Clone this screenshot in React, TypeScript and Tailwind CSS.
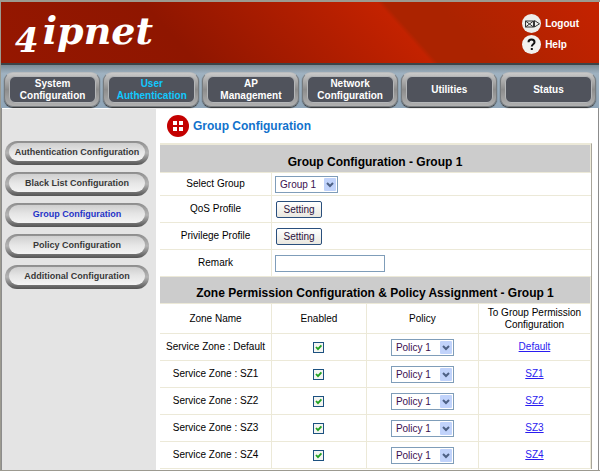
import { useState } from "react";

const NAV = [
  ["System", "Configuration"],
  ["User", "Authentication"],
  ["AP", "Management"],
  ["Network", "Configuration"],
  ["Utilities"],
  ["Status"],
];

const SIDE = [
  "Authentication Configuration",
  "Black List Configuration",
  "Group Configuration",
  "Policy Configuration",
  "Additional Configuration",
];

const ZONES = ["Default", "SZ1", "SZ2", "SZ3", "SZ4"];

const CELL = "border-b border-r border-[#ece9d8] p-0 text-center font-normal";
const BAND =
  "border-b border-r border-[#ece9d8] bg-[#cccccc] bg-clip-padding px-0 pb-0 text-center text-[12px] leading-[14px] font-bold";

function Picker({ id, label, options }: { id?: string; label?: string; options: string[] }) {
  return (
    <span className="relative inline-block h-[17px] align-middle">
      <select
        id={id}
        aria-label={label}
        className="block h-[17px] w-[63px] appearance-none border border-[#7f9db9] bg-white pl-1 text-[10px] leading-[15px] text-[#3a1050] outline-none"
      >
        {options.map((o) => (
          <option key={o}>{o}</option>
        ))}
      </select>
      <svg
        className="pointer-events-none absolute top-0.5 right-0.5"
        width="12"
        height="13"
        viewBox="0 0 12 13"
        aria-hidden="true"
      >
        <rect width="12" height="13" rx="1" fill="#c1d3fb" />
        <path d="M3 5l3 3 3-3" fill="none" stroke="#4d6185" strokeWidth="2" />
      </svg>
    </span>
  );
}

function XpButton({ id }: { id: string }) {
  return (
    <button
      id={id}
      type="button"
      className="ml-1 block h-[17px] w-[46px] rounded-[2px] border border-[#2a4f7c] bg-linear-to-b from-white to-[#e9e7df] text-[10px] leading-[15px] text-[#2a1040]"
    >
      Setting
    </button>
  );
}

function Tick({ label }: { label: string }) {
  const [on, setOn] = useState(true);
  return (
    <span className="relative inline-block size-[11px] align-middle">
      <input
        type="checkbox"
        aria-label={label}
        checked={on}
        onChange={() => setOn(!on)}
        className="block size-[11px] appearance-none border border-[#1c5180] bg-[#f5f5f2]"
      />
      {on && (
        <svg
          className="pointer-events-none absolute inset-0"
          width="11"
          height="11"
          viewBox="0 0 11 11"
          aria-hidden="true"
        >
          <path d="M3 5l2 2.2L8.4 3.4" fill="none" stroke="#21a121" strokeWidth="1.8" />
        </svg>
      )}
    </span>
  );
}

function Logo() {
  return (
    <h1
      aria-label="4ipnet"
      className="flex items-baseline gap-1 pl-[14px] font-['DejaVu_Serif','Liberation_Serif',serif] text-[38px] leading-[58px] font-bold text-white italic"
    >
      <span className="relative top-2 text-[34px] leading-none">4</span>
      <span>ipnet</span>
    </h1>
  );
}

function Header() {
  return (
    <header className="flex h-[61px] items-start justify-between bg-[linear-gradient(48deg,#951700_0%,#8f1600_30%,#c32200_66%,#ab2300_67%,#ab2300_75%,#c52200_100%)] pr-5">
      <Logo />
      <ul className="flex flex-col gap-0.5 pt-3 text-[10px] leading-[19px] font-bold text-white">
        <li>
          <a href="#logout" className="flex items-center gap-1">
            <svg width="19" height="19" viewBox="0 0 19 19" aria-hidden="true">
              <circle cx="9.500" cy="9.500" r="9.500" fill="#ededeb" />
              <path
                d="M3.500 7h8v6h-8zM3.500 7l8 6M11.500 7l-8 6M12.500 6.500v6.500l5-3.200z"
                fill="none"
                stroke="#333"
              />
            </svg>
            Logout
          </a>
        </li>
        <li>
          <a href="#help" className="flex items-center gap-1">
            <svg width="19" height="19" viewBox="0 0 19 19" aria-hidden="true">
              <circle cx="9.500" cy="9.500" r="9.500" fill="#f1f1ef" />
              <path
                d="M6.500 7.300c0-3.600 6-3.600 6 0 0 2-2.700 2-2.700 4.200M9.800 13v2"
                fill="none"
                stroke="#111"
                strokeWidth="2"
              />
            </svg>
            Help
          </a>
        </li>
      </ul>
    </header>
  );
}

function TopNav() {
  return (
    <nav className="flex gap-[3px] border-t-2 border-[#3c4448] bg-linear-to-b from-[#7b8a94] via-[#9fb2c1] via-20% to-[#8fa5b8] px-[3px] pt-[7px] pb-px">
      {NAV.map((lines, i) => (
        <a
          key={i}
          href={"#" + lines.join("-")}
          className="h-[35px] flex-1 rounded-[9px] border border-[#777b7e] border-t-[#b9bcbe] bg-linear-to-b from-[#c9c9c9] via-[#8d8d8d] to-[#b0b0b0] p-[3px] pl-1 shadow-[0_1px_1px_#333]"
        >
          <span
            className={
              "flex h-full items-center justify-center rounded-[6px] border border-[#b4b6b8] bg-[#50535c] text-center text-[10px] leading-[12px] font-bold " +
              (i === 1 ? "text-[#10c8ff]" : "text-white")
            }
          >
            <span>
              {lines.map((l) => (
                <span key={l} className="block">
                  {l}
                </span>
              ))}
            </span>
          </span>
        </a>
      ))}
    </nav>
  );
}

function Sidebar() {
  return (
    <nav className="flex w-[154px] shrink-0 flex-col gap-[7px] bg-[#e4e4e4] pt-[32px] pr-[7px] pl-[3px]">
      {SIDE.map((s, i) => (
        <a
          key={s}
          href={"#" + s}
          className="h-6 rounded-full bg-linear-to-b from-[#8d8d8d] via-[#b5b5b5] to-[#555] pt-[2px] pr-[4px] pb-[4px] pl-[4px]"
        >
          <span
            className={
              "flex h-[18px] items-center justify-center rounded-full bg-linear-to-b from-[#cfcfcf] via-[#e6e6e6] to-[#f4f4f4] text-[9px] leading-[16px] font-bold whitespace-nowrap " +
              (i === 2 ? "text-[#1f33c8]" : "text-[#383838]")
            }
          >
            {s}
          </span>
        </a>
      ))}
    </nav>
  );
}

function GroupTable() {
  return (
    <table className="w-full table-fixed border-separate border-spacing-0 border-t border-[#ece9d8]">
      <colgroup>
        <col className="w-[26%]" />
        <col />
      </colgroup>
      <thead>
        <tr>
          <th colSpan={2} className={BAND + " h-7 pt-[7px]"}>
            Group Configuration - Group 1
          </th>
        </tr>
      </thead>
      <tbody>
        <tr>
          <th scope="row" className={CELL + " h-[23px]"}>
            <label htmlFor="group">Select Group</label>
          </th>
          <td className="border-b border-[#ece9d8] p-0 pl-[3px]">
            <Picker id="group" options={["Group 1", "Group 2"]} />
          </td>
        </tr>
        <tr>
          <th scope="row" className={CELL + " h-[27px]"}>
            <label htmlFor="qos">QoS Profile</label>
          </th>
          <td className="border-b border-[#ece9d8] p-0">
            <XpButton id="qos" />
          </td>
        </tr>
        <tr>
          <th scope="row" className={CELL + " h-[27px]"}>
            <label htmlFor="privilege">Privilege Profile</label>
          </th>
          <td className="border-b border-[#ece9d8] p-0">
            <XpButton id="privilege" />
          </td>
        </tr>
        <tr>
          <th scope="row" className={CELL + " h-[27px]"}>
            <label htmlFor="remark">Remark</label>
          </th>
          <td className="border-b border-[#ece9d8] p-0 pl-[3px]">
            <input
              id="remark"
              type="text"
              className="block h-[17px] w-[110px] border border-[#7f9db9] bg-white px-1 text-[10px] outline-none"
            />
          </td>
        </tr>
      </tbody>
    </table>
  );
}

function ZoneTable() {
  return (
    <table className="w-full table-fixed border-separate border-spacing-0">
      <colgroup>
        <col className="w-[26%]" />
        <col className="w-[22%]" />
        <col className="w-[26%]" />
        <col className="w-[26%]" />
      </colgroup>
      <thead>
        <tr>
          <th colSpan={4} className={BAND + " h-[27px] pt-1.5"}>
            Zone Permission Configuration &amp; Policy Assignment - Group 1
          </th>
        </tr>
        <tr>
          <th className={CELL + " h-[30px]"}>Zone Name</th>
          <th className={CELL}>Enabled</th>
          <th className={CELL}>Policy</th>
          <th className={CELL + " leading-[12px]"}>
            To Group Permission
            <br />
            Configuration
          </th>
        </tr>
      </thead>
      <tbody>
        {ZONES.map((z) => (
          <tr key={z}>
            <th scope="row" className={CELL + " h-[27px]"}>
              Service Zone : {z}
            </th>
            <td className={CELL}>
              <Tick label={"Enable " + z} />
            </td>
            <td className={CELL}>
              <Picker label={"Policy for " + z} options={["Policy 1", "Policy 2"]} />
            </td>
            <td className={CELL}>
              <a href={"#" + z} className="text-[#2a1cf0] underline">
                {z}
              </a>
            </td>
          </tr>
        ))}
      </tbody>
    </table>
  );
}

export default function App() {
  return (
    <div className="border-t-2 border-b border-l border-[#9c9a90] bg-white font-['Liberation_Sans',Arial,sans-serif] text-[10px] leading-[12px] text-black">
      <div className="mr-px">
        <Header />
        <TopNav />
      </div>
      <div className="mr-px flex border-r border-l border-[#8c8c8c] pt-px">
        <Sidebar />
        <main className="min-w-0 flex-1 pr-[6px] pb-px pl-1">
          <h2 className="flex h-[34px] items-center gap-1 pl-[7px] text-[12px] leading-[14px] font-bold text-[#1272cc]">
            <svg width="22" height="22" viewBox="0 0 22 22" aria-hidden="true">
              <circle cx="11" cy="11" r="11" fill="#c40000" />
              <path d="M6 6h4v4H6zM12 6h4v4h-4zM6 12h4v4H6zM12 12h4v4h-4z" fill="#fff" />
            </svg>
            Group Configuration
          </h2>
          <div className="border-t border-r border-t-[#ece9d8] border-r-[#a8a59a]">
            <GroupTable />
            <ZoneTable />
          </div>
        </main>
      </div>
    </div>
  );
}
